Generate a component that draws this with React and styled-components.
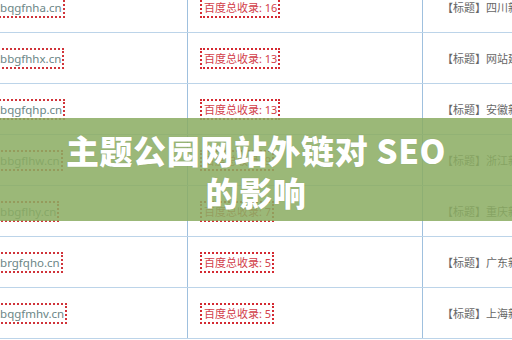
import styled, { createGlobalStyle } from "styled-components"

const GlobalStyle = createGlobalStyle`
  html, body {
    margin: 0;
    padding: 0;
    background: #ffffff;
  }
`;

const rows = [
  { domain: "xbqgfnha.cn", count: 16, title: "四川新闻网" },
  { domain: "xbbgfhhx.cn", count: 13, title: "网站建设" },
  { domain: "xbqgfqhp.cn", count: 13, title: "安徽新闻" },
  { domain: "xbbgflhw.cn", count: 9, title: "浙江新闻" },
  { domain: "xbbgflhy.cn", count: 7, title: "重庆新闻" },
  { domain: "xbrgfqho.cn", count: 5, title: "广东新闻" },
  { domain: "xbqgfmhv.cn", count: 5, title: "上海新闻" },
];

const Cover = styled.div`
  position: relative;
  width: 512px;
  height: 340px;
  overflow: hidden;
  background: #ffffff;
  font-family: "Noto Sans", "Noto Sans CJK SC", sans-serif;
`;

const Table = styled.div`
  margin-top: -18px;
  margin-left: -24px;
  width: 560px;
`;

const Row = styled.div`
  display: grid;
  grid-template-columns: 212px 235px 1fr;
  height: 51px;
  box-sizing: border-box;
  border-bottom: 1px solid #bcd4e9;
`;

const Cell = styled.div`
  display: flex;
  align-items: center;
  padding-left: ${(props) => props.$pad}px;
  border-right: ${(props) => (props.$last ? "none" : "1px solid #9fc0de")};
  overflow: hidden;
  white-space: nowrap;
`;

const Domain = styled.span`
  font-size: 11.5px;
  color: #6b8686;
  padding: 1px 1px 1px 0;
  line-height: 15px;
  border: 2px dotted #d0343a;
  border-left: none;
`;

const Count = styled.span`
  font-size: 11px;
  color: #d2404a;
  line-height: 15px;
  padding: 1px 1px 1px 2px;
  border: 2px dotted #d42a32;
`;

const Title = styled.span`
  font-size: 11px;
  color: #666666;
`;

const Band = styled.div`
  position: absolute;
  left: 0;
  right: 0;
  top: 118px;
  height: 103px;
  padding-top: 2px;
  box-sizing: border-box;
  background: rgba(138, 172, 98, 0.86);
  display: flex;
  flex-direction: column;
  align-items: center;
  justify-content: center;
`;

const Heading = styled.h1`
  margin: 0;
  width: 400px;
  text-align: center;
  font-family: "Noto Sans CJK SC", "Noto Sans", sans-serif;
  font-size: 33px;
  font-weight: 900;
  letter-spacing: 0.6px;
  line-height: 42px;
  color: #ffffff;
  text-shadow: 0 0 1px rgba(0, 0, 0, 0.15);
`;

const App = () => {
  return (
    <>
      <GlobalStyle />
      <Cover>
        <Table>
          {rows.map((row, i) => (
            <Row key={i}>
              <Cell $pad={18}>
                <Domain>{row.domain}</Domain>
              </Cell>
              <Cell $pad={12}>
                <Count>百度总收录: {row.count}</Count>
              </Cell>
              <Cell $pad={19} $last>
                <Title>【标题】{row.title}</Title>
              </Cell>
            </Row>
          ))}
        </Table>
        <Band>
          <Heading>主题公园网站外链对 SEO 的影响</Heading>
        </Band>
      </Cover>
    </>
  );
};

export default App
